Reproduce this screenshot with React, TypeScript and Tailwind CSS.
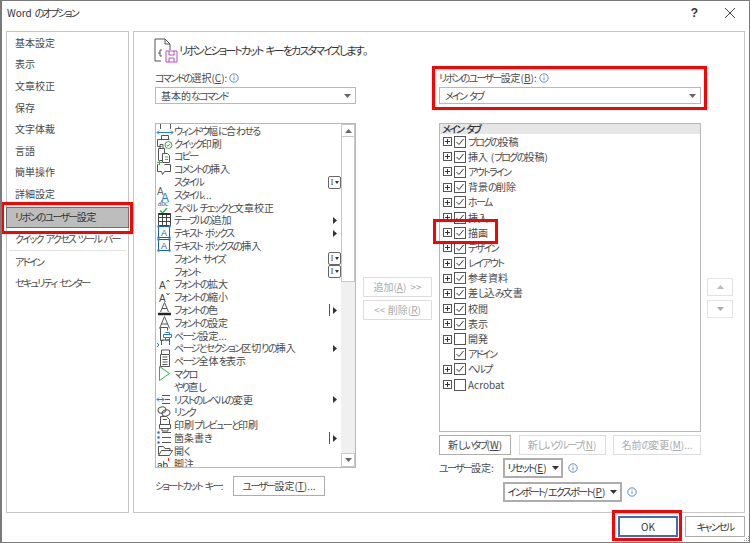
import React from "react";

const Svg = ({ children, w = 18, h = 14 }: { children?: React.ReactNode; w?: number; h?: number }) => (
  <svg width={w} height={h} viewBox={`0 0 ${w} ${h}`} fill="none" stroke="#555" strokeWidth="1" className="overflow-visible">{children}</svg>
);

const icons: Record<string, React.ReactNode> = {
  fit: <Svg><path d="M4.500 5V-2.500h10V5" /><path d="M1 8.500h16M1 8.500l2-2M1 8.500l2 2M17 8.500l-2-2M17 8.500l-2 2" stroke="#2b7cd3" /></Svg>,
  print: <Svg><path d="M5.500 -1.500h7v4h-7zM1.500 2.500h12M1.500 2.500v7h4M4 7.500h3v4h-3z" /><circle cx="12.500" cy="8" r="3.500" stroke="#2eb24a" /><path d="M10.800 8l1.200 1.200 2-2.400" stroke="#2eb24a" /></Svg>,
  copy: <Svg><path d="M2.500 -1.500h6v12h-6z" /><path d="M6.500 3.500h5l2 2v7h-7z" fill="#fff" /><path d="M9 7h3M9 9.500h3" stroke="#888" /></Svg>,
  comment: <Svg><path d="M2.500 2.500h-1v7h4l1 3 2-3h6v-7h-6" /><path d="M3.500 -2v5M1 .5h5" stroke="#2eb24a" /></Svg>,
  styleDots: <Svg><text x="1" y="7" fontSize="10" stroke="none" fill="#666" fontFamily="Liberation Sans">A</text><text x="5" y="13.500" fontSize="12" stroke="none" fill="#2b7cd3" fontFamily="Liberation Sans">A</text></Svg>,
  spell: <Svg><text x="2" y="5" fontSize="7.500" stroke="none" fill="#555" fontFamily="Liberation Serif">abc</text><path d="M4 9.500l2.500 2.500 4.500-5" stroke="#2eb24a" strokeWidth="1.300" /></Svg>,
  table: <Svg><path d="M2.500 .5h12v12h-12zM2.500 4.500h12M2.500 8.500h12M6.500 .5v12M10.500 .5v12" stroke="#444" /><path d="M2.500 1h12" stroke="#333" strokeWidth="2" /></Svg>,
  textbox: <Svg><rect x="2.500" y="0.500" width="11" height="11" stroke="#1f5fa8" /><text x="5" y="9.500" fontSize="9" stroke="none" fill="#1f5fa8" fontFamily="Liberation Sans">A</text><path d="M2.500 .5h.01M13.500 .5h.01M2.500 11.500h.01M13.500 11.500h.01" stroke="#2b7cd3" strokeWidth="2.500" strokeLinecap="round" /></Svg>,
  grow: <Svg><text x="3" y="12" fontSize="10" stroke="none" fill="#444" fontFamily="Liberation Sans">A</text><path d="M10.500 5l1.500-2 1.500 2" /></Svg>,
  shrink: <Svg><text x="3" y="12" fontSize="10" stroke="none" fill="#444" fontFamily="Liberation Sans">A</text><path d="M10.500 3l1.500 2 1.500-2" /></Svg>,
  color: <Svg><path d="M4.500 9l4-9.500 4 9.500M6 5.500h5" /><path d="M2 11h13" stroke="#222" strokeWidth="2.500" /></Svg>,
  fontSet: <Svg><path d="M3.500 12.500l5-12 5 12M5.500 8h6" /></Svg>,
  page: <Svg><path d="M4.500 -1.500h7v3M4.500 -1.500v13h3" /><path d="M7.500 5.500h8v3h-8zM9.500 3.500h4v2M9.500 8.500h4v2.500h-4z" stroke="#2b7cd3" /></Svg>,
  section: <Svg><path d="M5.500 4V-1h8v5M5.500 13V9h8v4" /><path d="M1 2l2 2-2 2" stroke="#2b7cd3" /></Svg>,
  whole: <Svg><path d="M4.500 .5h9v12h-9zM6.500 3h5M6.500 5.500h5M6.500 8h5M6.500 10.500h5" /></Svg>,
  macro: <Svg><path d="M3.500 -.5l10 7-10 7z" stroke="#2eb24a" /></Svg>,
  level: <Svg><path d="M6 2.500h8M9 6.500h5M6 10.500h8" /><path d="M1 6.500h7M1 6.500l2-2M1 6.500l2 2M8 6.500l-2-2M8 6.500l-2 2" stroke="#2b7cd3" /></Svg>,
  link: <Svg><ellipse cx="6" cy="5" rx="4" ry="3" transform="rotate(-15 6 5)" /><ellipse cx="10" cy="8" rx="4" ry="3" transform="rotate(-15 10 8)" /></Svg>,
  preview: <Svg><path d="M4.500 -1.500h6l3 3v6h-9zM7 1.500h4" /><path d="M3.500 6.500h11v4h-11zM6 10.500h6v2.500h-6z" fill="#fff" /></Svg>,
  bullet: <Svg><path d="M6 1.500h9M6 6.500h9M6 11.500h9" /><path d="M2.500 1.500h.01M2.500 6.500h.01M2.500 11.500h.01" stroke="#1f6fd0" strokeWidth="2.500" strokeLinecap="round" /></Svg>,
  open: <Svg><path d="M2.500 10.500V2.500h5l1.500 2h5v1.500" /><path d="M2.500 11.500l3-5h11l-3 5z" /></Svg>,
  foot: <Svg><text x="1" y="12" fontSize="10" stroke="none" fill="#333" fontFamily="Liberation Sans">ab</text><path d="M12.500 1v3" stroke="#d33" /></Svg>,
};

const commands: [string, string?, string?][] = [
  ["ウィンドウ幅に合わせる", "fit"],
  ["クイック印刷", "print"],
  ["コピー", "copy"],
  ["コメントの挿入", "comment"],
  ["スタイル", undefined, "combo"],
  ["スタイル...", "styleDots"],
  ["スペル チェックと文章校正", "spell"],
  ["テーブルの追加", "table", "arrow"],
  ["テキスト ボックス", "textbox", "arrow"],
  ["テキスト ボックスの挿入", "textbox"],
  ["フォント サイズ", undefined, "combo"],
  ["フォント", undefined, "combo"],
  ["フォントの拡大", "grow"],
  ["フォントの縮小", "shrink"],
  ["フォントの色", "color", "split"],
  ["フォントの設定", "fontSet"],
  ["ページ設定...", "page"],
  ["ページとセクション区切りの挿入", "section", "arrow"],
  ["ページ全体を表示", "whole"],
  ["マクロ", "macro"],
  ["やり直し"],
  ["リストのレベルの変更", "level", "arrow"],
  ["リンク", "link"],
  ["印刷プレビューと印刷", "preview"],
  ["箇条書き", "bullet", "split"],
  ["開く", "open"],
  ["脚注", "foot"],
];

const tabs: [string, boolean, boolean][] = [
  ["ブログの投稿", true, true],
  ["挿入 (ブログの投稿)", true, true],
  ["アウトライン", true, true],
  ["背景の削除", true, true],
  ["ホーム", true, true],
  ["挿入", true, true],
  ["描画", true, true],
  ["デザイン", true, true],
  ["レイアウト", true, true],
  ["参考資料", true, true],
  ["差し込み文書", true, true],
  ["校閲", true, true],
  ["表示", true, true],
  ["開発", true, false],
  ["アドイン", false, true],
  ["ヘルプ", true, true],
  ["Acrobat", true, false],
];

// Kana in the original UI font is condensed, kanji is not.
const T = ({ s }: { s: string }) => (
  <span>
    {s.split(/([ぁ-ゖァ-ヺー・]+)/).map((p, i) =>
      i % 2 ? <span key={i} className="tracking-[-0.17em]">{p}</span> : <span key={i} className="[word-spacing:0.500px]">{p}</span>
    )}
  </span>
);

const M = ({ t, k, a }: { t: string; k: string; a?: string }) => (
  <span className="whitespace-nowrap"><T s={t} /><span className="underline">{k}</span><span className="[word-spacing:2px]">{a}</span></span>
);

const Info = () => (
  <svg width="10" height="10" viewBox="0 0 10 10" className="shrink-0">
    <circle cx="5" cy="5" r="4.200" fill="none" stroke="#5b8fd0" />
    <path d="M5 4.300v3M5 2.300v1" stroke="#5b8fd0" />
  </svg>
);

const Caret = ({ color = "#555" }: { color?: string }) => (
  <svg width="7" height="4" viewBox="0 0 7 4" className="shrink-0"><path d="M0 0h7L3.500 4z" fill={color} /></svg>
);

const Arrow = () => <svg width="4" height="7" viewBox="0 0 4 7"><path d="M0 0l4 3.500L0 7z" fill="#333" /></svg>;

const Combo = () => (
  <span className="flex items-center justify-center w-[13px] h-[13px] border border-[#666] rounded-[2px] gap-px bg-white">
    <span className="text-[9px] leading-none font-['Liberation_Serif',serif]">I</span>
    <svg width="4" height="3" viewBox="0 0 4 3"><path d="M0 0h4L2 3z" fill="#333" /></svg>
  </span>
);

const Select = ({ label }: { label: string }) => (
  <div className="flex items-center justify-between h-[17px] border border-[#b8b8b8] bg-white pl-[5px] pr-[4px]">
    <span><T s={label} /></span>
    <Caret color="#666" />
  </div>
);

const Btn = ({ children, off, w }: { children: React.ReactNode; off?: boolean; w: string }) => (
  <div className={`flex items-center justify-center h-[20px] ${w} border ${off ? "border-[#ddd] text-[#aaa]" : "border-[#adadad] text-[#444]"} bg-white`}>
    {children}
  </div>
);

const Red = ({ cls }: { cls: string }) => <div className={`absolute border-[3px] border-[#ff0000] pointer-events-none ${cls}`} />;

export default function App() {
  const side = ["基本設定", "表示", "文章校正", "保存", "文字体裁", "言語", "簡単操作", "詳細設定"];
  return (
    <div className="relative w-[750px] h-[543px] overflow-hidden whitespace-nowrap bg-white border-l-2 border-t border-r border-b border-[#7a7a7a] text-[10px] leading-none text-[#4a4a4a] font-['Noto_Sans_CJK_JP','Noto_Sans',sans-serif] [font-feature-settings:'palt']">
      <div className="flex items-center justify-between h-[30px] pb-[6px] pl-[5px] pr-[14px] text-[10px] text-[#333]">
        <span><T s="Word のオプション" /></span>
        <div className="flex items-center gap-[27px]">
          <span className="text-[12px] font-['Liberation_Sans',sans-serif] font-bold">?</span>
          <svg width="10" height="10" viewBox="0 0 10 10"><path d="M0 0l10 10M10 0L0 10" stroke="#444" /></svg>
        </div>
      </div>

      <div className="flex gap-[4px] pl-[4px] pr-[4px] h-[482px]">
        <div className="flex flex-col w-[123px] shrink-0 border border-[#c6c6c6]">
          {side.map((s) => (
            <div key={s} className="flex items-center h-[21.600px] shrink-0 pl-[8px]"><T s={s} /></div>
          ))}
          <div className="flex items-center h-[21px] shrink-0 mt-[2px] mx-[-1px] pl-[8px] bg-[#bdbdbd] border border-[#6e6e6e] text-[#333]"><T s="リボンのユーザー設定" /></div>
          <div className="flex items-center h-[22px] shrink-0 pl-[8px]"><T s="クイック アクセス ツール バー" /></div>
          <div className="h-px shrink-0 bg-[#e2e2e2] mx-[2px]" />
          <div className="flex items-center h-[21.600px] shrink-0 pl-[8px]"><T s="アドイン" /></div>
          <div className="flex items-center h-[21.600px] shrink-0 pl-[8px]"><T s="セキュリティ センター" /></div>
        </div>

        <div className="flex-1 border border-[#c6c6c6] pl-[21px] min-w-0">
          <div className="flex items-center h-[31px] gap-[1px] pt-[5px] -ml-[1px] text-[11px] text-[#333]">
            <svg width="24" height="25" viewBox="0 0 24 25" fill="none" className="shrink-0">
              <path d="M1 1h10l5 5v6M1 1v22h6" stroke="#555" />
              <path d="M11 1v5h5" stroke="#555" />
              <path d="M8 12H6v3H4M8 18H6v-3" stroke="#555" />
              <path d="M12 13h11v11H12zM15 13v4h5v-4M15 24v-4h5v4" stroke="#b84fc0" />
            </svg>
            <span><T s="リボンとショートカット キーをカスタマイズします。" /></span>
          </div>

          <div className="flex mt-[9px]">
            <div className="flex flex-col w-[201px] shrink-0">
              <div className="flex items-center h-[12px] gap-[2px]">
                <M t="コマンドの選択(" k="C" a="):" />
                <Info />
              </div>
              <div className="mt-[3px]"><Select label="基本的なコマンド" /></div>
              <div className="mt-[19px] flex h-[345px] border border-[#b8b8b8] overflow-hidden bg-white">
                <div className="flex-1 min-w-0 flex flex-col pt-[0.500px]">
                  {commands.map(([t, ic, tail]) => (
                    <div key={t + (ic ?? "")} className="flex items-center h-[12.800px] shrink-0">
                      <span className="flex w-[18px] h-[14px] shrink-0 items-center justify-center">{ic ? icons[ic] : null}</span>
                      <span className="flex-1 whitespace-nowrap"><T s={t} /></span>
                      <span className="flex items-center w-[13px] shrink-0">
                        {tail === "combo" && <Combo />}
                        {tail === "arrow" && <span className="pl-[5px]"><Arrow /></span>}
                        {tail === "split" && <span className="flex items-center gap-[3px] pl-px"><span className="w-px h-[12px] bg-[#555]" /><Arrow /></span>}
                      </span>
                    </div>
                  ))}
                </div>
                <div className="flex flex-col w-[14px] shrink-0 h-full">
                  <div className="flex items-center justify-center h-[13px] border border-[#c8c8c8]"><svg width="7" height="4" viewBox="0 0 7 4"><path d="M3.500 0L7 4H0z" fill="#666" /></svg></div>
                  <div className="h-[145px] bg-white border-x border-b border-[#c8c8c8]" />
                  <div className="flex-1 bg-[#f0f0f0]" />
                  <div className="flex items-center justify-center h-[14px] border border-[#c8c8c8]"><Caret color="#666" /></div>
                </div>
              </div>
              <div className="flex items-center mt-[8px]">
                <span className="w-[78px]"><T s="ショートカット キー:" /></span>
                <Btn w="w-[92px]"><M t="ユーザー設定(" k="T" a=")..." /></Btn>
              </div>
            </div>

            <div className="flex flex-col w-[83px] shrink-0 pl-[7px] pt-[205px] gap-[3px]">
              <Btn off w="w-[69px]"><M t="追加(" k="A" a=") >>" /></Btn>
              <Btn off w="w-[69px]"><M t="<< 削除(" k="R" a=")" /></Btn>
            </div>

            <div className="flex flex-col w-[262px] shrink-0">
              <div className="flex items-center h-[12px] gap-[2px]">
                <M t="リボンのユーザー設定(" k="B" a="):" />
                <Info />
              </div>
              <div className="mt-[3px]"><Select label="メイン タブ" /></div>
              <div className="mt-[19px] flex flex-col h-[309px] border border-[#b8b8b8] bg-white">
                <div className="flex items-center h-[10px] shrink-0 bg-[#e6e6e6] pl-[2px] text-[#333] font-medium"><T s="メイン タブ" /></div>
                {tabs.map(([t, exp, chk]) => (
                  <div key={t} className="flex items-center h-[15.200px] shrink-0 pl-[3px]">
                    {exp ? (
                      <span className="flex items-center justify-center w-[9px] h-[9px] border border-[#555] shrink-0">
                        <svg width="7" height="7" viewBox="0 0 7 7"><path d="M3.500 1v5M1 3.500h5" stroke="#333" /></svg>
                      </span>
                    ) : (
                      <span className="w-[9px] shrink-0" />
                    )}
                    <span className="flex items-center justify-center w-[12px] h-[12px] ml-[2px] border border-[#555] shrink-0">
                      {chk && <svg width="10" height="10" viewBox="0 0 10 10" fill="none"><path d="M1.500 5l2.500 2.500L8.500 2" stroke="#333" /></svg>}
                    </span>
                    <span className="ml-[2px] whitespace-nowrap"><T s={t} /></span>
                  </div>
                ))}
              </div>
              <div className="flex justify-between mt-[3px]">
                <Btn w="w-[72px]"><M t="新しいタブ(" k="W" a=")" /></Btn>
                <Btn off w="w-[87px]"><M t="新しいグループ(" k="N" a=")" /></Btn>
                <Btn off w="w-[88px]"><M t="名前の変更(" k="M" a=")..." /></Btn>
              </div>
              <div className="flex items-center mt-[3px] h-[20px]">
                <span className="w-[64px]"><T s="ユーザー設定:" /></span>
                <div className="flex items-center justify-center gap-[5px] w-[60px] h-[20px] border-2 border-[#adadad] text-[#333]"><M t="リセット(" k="E" a=")" /><Caret color="#333" /></div>
                <span className="ml-[5px]"><Info /></span>
              </div>
              <div className="flex items-center mt-[4px] h-[20px] pl-[64px]">
                <div className="flex items-center justify-center gap-[5px] w-[119px] h-[20px] border-2 border-[#adadad] text-[#333]"><M t="インポート/エクスポート(" k="P" a=")" /><Caret color="#333" /></div>
                <span className="ml-[5px]"><Info /></span>
              </div>
            </div>

            <div className="flex flex-col pl-[6px] pt-[206px] gap-[4px]">
              <div className="flex items-center justify-center w-[26px] h-[18px] border border-[#e3e3e3]"><svg width="7" height="4" viewBox="0 0 7 4"><path d="M3.500 0L7 4H0z" fill="#bbb" /></svg></div>
              <div className="flex items-center justify-center w-[26px] h-[18px] border border-[#e3e3e3]"><svg width="7" height="4" viewBox="0 0 7 4"><path d="M0 0h7L3.500 4z" fill="#aaa" /></svg></div>
            </div>
          </div>
        </div>
      </div>

      <div className="flex justify-end gap-[7px] pr-[4px] mt-[3px]">
        <div className="flex items-center justify-center w-[60px] h-[21px] border-2 border-[#3c6fb5] text-[#333]">OK</div>
        <div className="flex items-center justify-center w-[60px] h-[21px] border border-[#adadad] text-[#333]"><T s="キャンセル" /></div>
      </div>

      <svg width="5" height="5" viewBox="0 0 5 5" className="absolute right-0 bottom-[1px]"><path d="M4 0h1v1H4zM2 2h1v1H2zM4 2h1v1H4zM0 4h1v1H0zM2 4h1v1H2zM4 4h1v1H4z" fill="#999" /></svg>
      <Red cls="left-[-1px] top-[201px] w-[132px] h-[32px]" />
      <Red cls="left-[430px] top-[65px] w-[275px] h-[44px]" />
      <Red cls="left-[431px] top-[218px] w-[65px] h-[25px]" />
      <Red cls="left-[610px] top-[509px] w-[70px] h-[31px]" />
    </div>
  );
}
